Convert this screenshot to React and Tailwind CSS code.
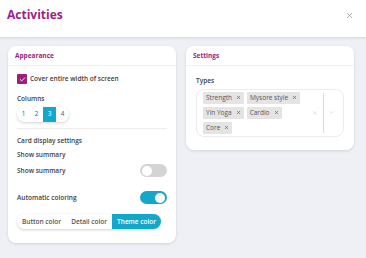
import React from 'react'
import { X, Check, ChevronDown } from 'lucide-react'

const PURPLE = 'text-[#9c2383]'

const TAGS = [['Strength', 'Mysore style'], ['Yin Yoga', 'Cardio'], ['Core']]

function Toggle({ on }) {
  return (
    <div
      className={`w-[27px] h-[13px] rounded-full flex items-center px-[2px] ${
        on ? 'bg-[#13a8c9] justify-end' : 'bg-[#d4d4d4] justify-start'
      }`}
    >
      <div className="w-[10px] h-[10px] rounded-full bg-white" />
    </div>
  )
}

function Tag({ label }) {
  return (
    <span className="flex items-center gap-[4px] bg-[#e4e4e4] rounded-[1px] px-[3px] h-[12px] text-[6.5px] text-[#555]">
      {label}
      <X size={5} strokeWidth={3} className="text-[#555]" />
    </span>
  )
}

export default function App() {
  return (
    <div className="w-[366px] h-[258px] bg-[#eef0f5] font-['Open_Sans',sans-serif] text-[#404040] flex flex-col overflow-hidden">
      <header className="h-[38px] shrink-0 bg-white border-b border-[#dcdde2] shadow-[0_1px_2px_rgba(0,0,0,0.06)] flex items-center justify-between pl-[7px] pr-[12px]">
        <h1 className={`text-[12px] font-bold ${PURPLE} -mt-[8px]`}>Activities</h1>
        <X size={9} strokeWidth={1.5} className="text-[#777] -mt-[6px]" />
      </header>

      <div className="flex items-start gap-[10px] px-[8px] pt-[8px]">
        {/* Appearance card */}
        <section className="w-[168px] bg-white rounded-[8px] shadow-[0_1px_3px_rgba(0,0,0,0.12)]">
          <div className="h-[20px] flex items-center px-[7px] border-b border-[#f0f0f0]">
            <h2 className={`text-[6.5px] font-bold ${PURPLE}`}>Appearance</h2>
          </div>
          <div className="px-[9px] pt-[8px] pb-[14px] text-[6.5px] font-semibold">
            <label className="flex items-center gap-[3px]">
              <span className="w-[10px] h-[10px] bg-[#9c1f80] flex items-center justify-center rounded-[1px]">
                <Check size={7} strokeWidth={3} className="text-white" />
              </span>
              <span>Cover entire width of screen</span>
            </label>

            <div className="mt-[10px]">Columns</div>
            <div className="mt-[3px] inline-flex h-[15px] rounded-full bg-white shadow-[0_1px_3px_rgba(0,0,0,0.18)] overflow-hidden">
              {['1', '2', '3', '4'].map((n) => (
                <span
                  key={n}
                  className={`w-[13px] flex items-center justify-center font-normal ${
                    n === '3' ? 'bg-[#13a8c9] text-white' : 'text-[#555]'
                  }`}
                >
                  {n}
                </span>
              ))}
            </div>

            <div className="mt-[6px] border-t border-[#ececec]" />

            <div className="mt-[7px]">Card display settings</div>
            <div className="mt-[4px]">Show summary</div>

            <div className="mt-[5px] flex items-center justify-between">
              <span>Show summary</span>
              <Toggle on={false} />
            </div>
            <div className="mt-[14px] flex items-center justify-between">
              <span>Automatic coloring</span>
              <Toggle on />
            </div>

            <div className="mt-[10px] inline-flex h-[15px] rounded-full bg-white shadow-[0_1px_3px_rgba(0,0,0,0.18)] overflow-hidden">
              <span className="flex items-center px-[5px] text-[#555]">Button color</span>
              <span className="flex items-center px-[5px] text-[#555]">Detail color</span>
              <span className="flex items-center px-[5px] bg-[#13a8c9] text-white">Theme color</span>
            </div>
          </div>
        </section>

        {/* Settings card */}
        <section className="w-[168px] bg-white rounded-[8px] shadow-[0_1px_3px_rgba(0,0,0,0.12)]">
          <div className="h-[20px] flex items-center px-[7px] border-b border-[#f0f0f0]">
            <h2 className={`text-[6.5px] font-bold ${PURPLE}`}>Settings</h2>
          </div>
          <div className="px-[10px] pt-[10px] pb-[13px] text-[6.5px] font-semibold">
            <div>Types</div>
            <div className="mt-[3px] flex items-center rounded-[8px] border border-[#ececec] pl-[6px] pr-[4px] py-[2px] h-[48px]">
              <div className="flex-1 flex flex-col gap-[3px] font-normal">
                {TAGS.map((row, i) => (
                  <div key={i} className="flex gap-[3px]">
                    {row.map((t) => (
                      <Tag key={t} label={t} />
                    ))}
                  </div>
                ))}
              </div>
              <X size={6} strokeWidth={1.5} className="text-[#bbb] mr-[5px]" />
              <div className="w-px h-[40px] bg-[#ddd]" />
              <ChevronDown size={7} strokeWidth={1.5} className="text-[#bbb] mx-[4px]" />
            </div>
          </div>
        </section>
      </div>
    </div>
  )
}
